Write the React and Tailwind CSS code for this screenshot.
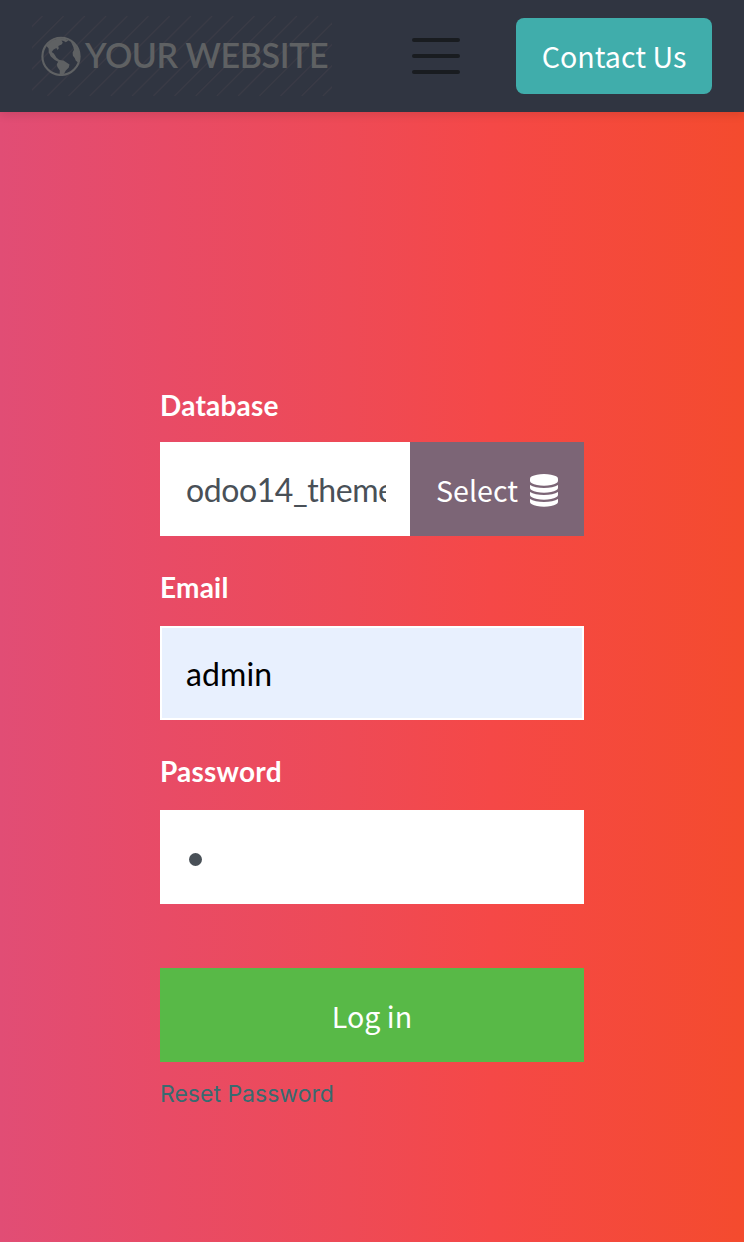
function GlobeIcon() {
  return (
    <svg viewBox="0 0 40 40" className="relative size-[40px] shrink-0" fill="currentColor" aria-hidden="true">
      <circle cx="20" cy="20.4" r="18.6" fill="none" stroke="currentColor" strokeWidth="2.1" />
      <path d="M5.2 9.7L11 4.6L18.5 2L24.5 2.9L27.5 4.6L24.8 6.2L22.8 4.9L20.5 4.6L21.8 6.8L20.6 8.4L17.3 10.1L17.8 12.6L16.4 14.1L15.4 12L12.6 13.6L10.7 15.9L12.8 17.4L14 19.2L15.3 21.4L18 23.8L20 24.2L22.5 24.6L25.5 26.4L28.5 28.6L27.8 31.6L24.8 34.4L23.2 37.4L21 39.4L18.6 39.2L18.8 34.6L16.4 31.1L15.8 28.2L17.2 25.8L13.8 23.9L9.8 20.4L7.8 16.6L7.6 12.5Z" />
      <path d="M29.8 5.6L33.5 8.4L36.6 12.6L38.7 17.8L38.8 23.4L36.8 26.2L34.8 24.7L33.7 22.1L31.9 19.8L31.6 16.4L33 13.7L32.4 11.2L31.4 9.1Z" />
    </svg>
  );
}

function DatabaseIcon() {
  return (
    <svg viewBox="0 0 1536 1792" className="ml-[12px] h-[32.67px] w-[28px]" fill="currentColor" aria-hidden="true">
      <path d="M768 768q237 0 443-43t325-127v170q0 69-103 128t-280 93.5-385 34.5-385-34.5-280-93.5-103-128v-170q119 84 325 127t443 43zm0 768q237 0 443-43t325-127v170q0 69-103 128t-280 93.5-385 34.5-385-34.5-280-93.5-103-128v-170q119 84 325 127t443 43zm0-384q237 0 443-43t325-127v170q0 69-103 128t-280 93.5-385 34.5-385-34.5-280-93.5-103-128v-170q119 84 325 127t443 43zm0-1152q208 0 385 34.5t280 93.5 103 128v128q0 69-103 128t-280 93.5-385 34.5-385-34.5-280-93.5-103-128v-128q0-69 103-128t280-93.5 385-34.5z" />
    </svg>
  );
}

function Logo() {
  const lines = Array.from({ length: 19 }, (_, i) => -69.5 + i * 21.2);
  return (
    <a href="#" className="relative flex h-20 w-[300px] items-center overflow-hidden pl-[9px] text-[#5f6163]">
      <svg className="absolute inset-0 h-20 w-[300px]" viewBox="0 0 300 80" aria-hidden="true">
        {lines.map((x) => (
          <path key={x} d={`M${x} 80L${x + 80} 0`} stroke="#3a3b46" strokeWidth="1.4" />
        ))}
      </svg>
      <GlobeIcon />
      <span className="relative -mt-[3px] ml-[4px] whitespace-nowrap font-['Lato',sans-serif] text-[34px] leading-[40px] font-semibold tracking-[-0.4px]">
        YOUR WEBSITE
      </span>
    </a>
  );
}

const labelClass = "block font-['Lato',sans-serif] text-[28px] leading-[42px] font-bold tracking-[0.22px] text-white";
const inputClass = "h-[94px] border-2 border-white pl-6 pr-[22px] font-['Lato',sans-serif] text-[32px] outline-none";
const buttonFont = "font-['Noto_Sans_CJK_SC',sans-serif] font-normal";

export default function App() {
  return (
    <div className="flex h-[1242px] w-[744px] flex-col bg-[linear-gradient(90deg,#e14d75_0%,#e84b66_22%,#ee4a56_47%,#f54847_66%,#f44b2e_100%)]">
      <header className="flex h-28 shrink-0 items-center bg-[#303541] px-8 shadow-[0_4px_8px_rgba(0,0,0,0.09)]">
        <Logo />
        <button aria-label="Menu" className="ml-20 flex w-12 flex-col gap-3">
          <span className="h-1 rounded-full bg-[#191c20]" />
          <span className="h-1 rounded-full bg-[#191c20]" />
          <span className="h-1 rounded-full bg-[#191c20]" />
        </button>
        <a href="#" className={`ml-14 flex h-[76px] w-[196px] items-center justify-center rounded-lg bg-[#40adab] text-[28.6px] text-white ${buttonFont}`}>
          Contact Us
        </a>
      </header>
      <form className="mx-40 mt-[272px] flex flex-col">
        <label className={labelClass}>Database</label>
        <div className="mt-4 flex">
          <input defaultValue="odoo14_theme_test" className={`${inputClass} w-[250px] bg-white tracking-[-0.42px] text-[#495057]`} />
          <button type="button" className={`flex w-[174px] items-center justify-center bg-[#7c6576] pt-[3px] text-[28.6px] text-white ${buttonFont}`}>
            Select
            <DatabaseIcon />
          </button>
        </div>
        <label className={`${labelClass} mt-[30px]`}>Email</label>
        <input defaultValue="admin" className={`${inputClass} mt-[18px] bg-[#e8f0fe] tracking-[0.1px] text-black`} />
        <label className={`${labelClass} mt-[30px]`}>Password</label>
        <div className={`${inputClass} mt-[18px] flex items-center bg-white`}>
          <span className="mt-[5px] ml-[3px] size-[12.5px] rounded-full bg-[#495057]" />
        </div>
        <button type="button" className={`mt-16 h-[94px] bg-[#58b947] pt-[2px] text-[28.6px] text-white ${buttonFont}`}>
          Log in
        </button>
        <a href="#" className="mt-[14px] self-start font-['Inter',sans-serif] text-[23px] leading-9 text-[#376b70]">
          Reset Password
        </a>
      </form>
    </div>
  );
}
